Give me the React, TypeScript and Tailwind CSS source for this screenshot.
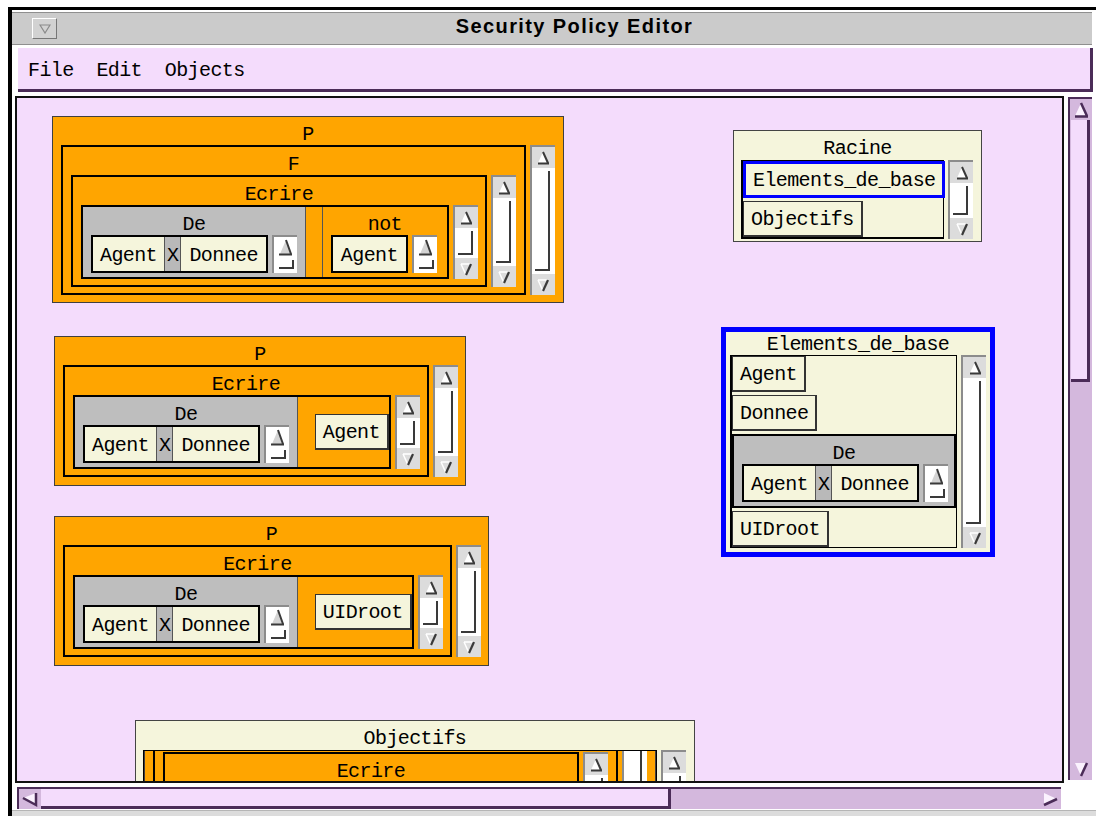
import React from 'react';

const INK = '#3a3a3a';
const PLUM = '#4b2c58';

// ---------- scrollbar glyphs ----------

function BoxUp() {
  return (
    <svg width="16" height="16" viewBox="0 0 16 16">
      <polygon points="8,2 3,13 13,13" fill="#ffffff" />
      <path d="M8 2 L13 13 M3 13.5 H14" stroke={INK} strokeWidth="2" fill="none" />
    </svg>
  );
}

function BoxDown() {
  return (
    <svg width="16" height="16" viewBox="0 0 16 16">
      <path d="M3 3 H13 M3 3 L8 14" stroke="#ffffff" strokeWidth="1.5" fill="none" />
      <path d="M13 3 L8 14" stroke={INK} strokeWidth="2.2" fill="none" />
    </svg>
  );
}

function PlumArrow({ dir }: { dir: 'up' | 'down' | 'left' | 'right' }) {
  if (dir === 'up')
    return (
      <svg width="18" height="18" viewBox="0 0 18 18">
        <polygon points="9,2 3,15 15,15" fill="#fbf2fe" />
        <path d="M9 2 L15 15 M3 15.5 H16" stroke={PLUM} strokeWidth="2.5" fill="none" />
      </svg>
    );
  if (dir === 'down')
    return (
      <svg width="18" height="18" viewBox="0 0 18 18">
        <polygon points="3,3 15,3 9,16" fill="#fbf2fe" />
        <path d="M15 3 L9 16" stroke={PLUM} strokeWidth="2.5" fill="none" />
      </svg>
    );
  if (dir === 'left')
    return (
      <svg width="18" height="18" viewBox="0 0 18 18">
        <polygon points="2,8 15,3 15,15" fill="#fbf2fe" />
        <path d="M2 8 L15 15 V3" stroke={PLUM} strokeWidth="2.5" fill="none" />
      </svg>
    );
  return (
    <svg width="18" height="18" viewBox="0 0 18 18">
      <polygon points="3,3 16,9 3,15" fill="#fbf2fe" />
      <path d="M16 9 L3 15" stroke={PLUM} strokeWidth="2.5" fill="none" />
    </svg>
  );
}

// ---------- small widgets used inside the diagram ----------

function BoxScroll({ className = '' }: { className?: string }) {
  return (
    <div className={`flex w-[25px] shrink-0 flex-col border-l-2 border-t-2 border-[#8c8c8c] bg-white ${className}`}>
      <div className="flex h-[21px] shrink-0 items-center justify-center bg-[#dcdcdc]">
        <BoxUp />
      </div>
      <div className="flex min-h-0 flex-1 pb-[3px] pl-[3px] pr-[5px] pt-[3px]">
        <div className="flex-1 border-b-2 border-r-2 border-[#3a3a3a]" />
      </div>
      <div className="flex h-[21px] shrink-0 items-center justify-center bg-[#dcdcdc]">
        <BoxDown />
      </div>
    </div>
  );
}

function NubScroll() {
  return (
    <div className="h-[38px] w-[25px] shrink-0 border-l-2 border-t-2 border-[#8c8c8c] bg-white">
      <svg width="23" height="36" viewBox="0 0 23 36">
        <polygon points="12,3 6,17 17,17" fill="#d4d4d4" />
        <path d="M12 3 L17 17 M5 17.5 H18" stroke={INK} strokeWidth="2" fill="none" />
        <path d="M5 31 H19 V23" stroke={INK} strokeWidth="2" fill="none" />
      </svg>
    </div>
  );
}

type FrameProps = {
  title: string;
  className?: string;
  head?: string;
  body: string;
  children: React.ReactNode;
};

function Frame({ title, className = '', head = 'h-[28px] pt-[7px]', body, children }: FrameProps) {
  return (
    <div className={`flex shrink-0 flex-col ${className}`}>
      <div className={`flex shrink-0 items-center justify-center leading-none ${head}`}>{title}</div>
      <div className={`flex items-stretch gap-[4px] ${body}`}>{children}</div>
    </div>
  );
}

function Cell({ children, className = '' }: { children: React.ReactNode; className?: string }) {
  return (
    <div className={`flex h-[36px] shrink-0 items-center bg-[#f5f5dc] px-[7px] pt-[3px] leading-none ${className}`}>
      {children}
    </div>
  );
}

function Pair() {
  return (
    <div className="flex h-[38px] shrink-0 border-2 border-black bg-[#f5f5dc] pt-[3px] leading-none">
      <span className="flex items-center px-[7px]">Agent</span>
      <span className="-mt-[3px] flex items-center border-x border-[#555] bg-[#b9b9b9] px-[2px] pt-[3px]">X</span>
      <span className="flex items-center px-[8px]">Donnee</span>
    </div>
  );
}

function DeFrame({ className = '' }: { className?: string }) {
  return (
    <Frame title="De" className={`bg-[#bebebe] ${className}`} body="pl-[8px] pr-[8px] pb-[4px]">
      <Pair />
      <NubScroll />
    </Frame>
  );
}

function Ecrire({ children }: { children: React.ReactNode }) {
  return (
    <Frame title="Ecrire" className="border-2 border-black bg-[#ffa500]" body="pl-[8px] pr-[7px] pb-[6px]">
      {children}
      <BoxScroll />
    </Frame>
  );
}

// P ( F ( Ecrire ( De(Agent x Donnee), not(Agent) ) ) )
function PolicyNot({ className = '' }: { className?: string }) {
  return (
    <Frame title="P" className={`border border-[#404040] bg-[#ffa500] ${className}`} body="pl-[8px] pr-[8px] pb-[7px]">
      <Frame title="F" className="border-2 border-black bg-[#ffa500]" body="pl-[8px] pr-[8px] pb-[6px]">
        <Ecrire>
          <div className="flex border-2 border-black bg-[#ffa500]">
            <DeFrame className="border-r border-[#555]" />
            <Frame title="not" className="ml-[16px] border-l border-[#555]" body="pl-[8px] pr-[10px] pb-[4px]">
              <Cell className="h-[38px] border-2 border-black px-[8px]">Agent</Cell>
              <NubScroll />
            </Frame>
          </div>
        </Ecrire>
        <BoxScroll />
      </Frame>
      <BoxScroll />
    </Frame>
  );
}

// P ( Ecrire ( De(Agent x Donnee), target ) )
function PolicyTarget({ target, className = '' }: { target: string; className?: string }) {
  return (
    <Frame title="P" className={`border border-[#404040] bg-[#ffa500] ${className}`} body="pl-[8px] pr-[7px] pb-[8px]">
      <Ecrire>
        <div className="flex border-2 border-black bg-[#ffa500]">
          <DeFrame className="border-r border-[#555]" />
          <Cell className="ml-[17px] self-center border border-b-2 border-r-2 border-[#333]">{target}</Cell>
        </div>
      </Ecrire>
      <BoxScroll />
    </Frame>
  );
}

const itemCell = 'border border-b-2 border-r-2 border-[#333] self-start';

export default function App() {
  return (
    <div className="relative h-[816px] w-[1096px] overflow-hidden whitespace-nowrap bg-white font-['Liberation_Mono',monospace] text-[20px] tracking-[-0.6px] text-black">
      <div className="ml-[8px] mt-[7px] flex h-[809px] w-[1088px] flex-col border-l-4 border-t-[3px] border-black bg-white">
        {/* title bar */}
        <div className="mr-[4px] mt-[2px] flex h-[33px] shrink-0 items-center border-y border-[#8f8f8f] bg-[#cbcbcb]">
          <div className="ml-[20px] flex h-[21px] w-[25px] items-center justify-center border border-b-[#777] border-l-white border-r-[#777] border-t-white bg-[#d2d2d2]">
            <svg width="12" height="10" viewBox="0 0 12 10">
              <path d="M1 1 H11 L6 9 Z" fill="none" stroke="#8a8a8a" strokeWidth="1.2" />
            </svg>
          </div>
          <div className="flex flex-1 justify-center pb-[5px] font-['Liberation_Sans',Arial,sans-serif] text-[20px] font-bold tracking-[1.4px]">
            Security Policy Editor
          </div>
        </div>

        {/* menu bar */}
        <div className="ml-[6px] mr-[3px] mt-[3px] flex h-[44px] shrink-0 items-center gap-[22.8px] border-b-[3px] border-r-[3px] border-[#4b2c58] bg-[#f4dcfc] pl-[10px] pt-[5px] leading-none">
          <span>File</span>
          <span>Edit</span>
          <span>Objects</span>
        </div>

        {/* canvas + vertical scrollbar */}
        <div className="ml-[3px] mt-[4px] flex shrink-0 gap-[4px]">
          <div className="relative h-[687px] w-[1049px] overflow-hidden border-2 border-[#111] bg-[#f4dcfc]">
            <PolicyNot className="absolute left-[35px] top-[18px]" />
            <PolicyTarget target="Agent" className="absolute left-[37px] top-[238px]" />
            <PolicyTarget target="UIDroot" className="absolute left-[37px] top-[418px]" />

            {/* Racine */}
            <Frame title="Racine" head="h-[29px] pt-[7px]" className="absolute left-[716px] top-[32px] border border-[#444] bg-[#f5f5dc]" body="pl-[7px] pr-[8px] pb-[2px]">
              <div className="flex w-[203px] flex-col gap-[3px] border-b-2 border-l-2 border-r border-t border-black">
                <Cell className="h-[37px] self-start border-[3px] border-[#0000ff] px-[5px]">Elements_de_base</Cell>
                <Cell className={`h-[35px] ${itemCell}`}>Objectifs</Cell>
              </div>
              <BoxScroll />
            </Frame>

            {/* Elements_de_base */}
            <Frame title="Elements_de_base" head="h-[23px] pt-[3px]" className="absolute left-[704px] top-[229px] border-[5px] border-[#0000ff] bg-[#f5f5dc]" body="px-[4px] pb-[4px]">
              <div className="flex w-[227px] flex-col gap-[3px] border-l-2 border-t border-r border-b border-black">
                <Cell className={itemCell}>Agent</Cell>
                <Cell className={itemCell}>Donnee</Cell>
                <DeFrame className="border-2 border-black" />
                <Cell className={itemCell}>UIDroot</Cell>
              </div>
              <BoxScroll />
            </Frame>

            {/* Objectifs */}
            <Frame title="Objectifs" head="h-[29px] pt-[6px]" className="absolute left-[118px] top-[622px] border border-[#444] bg-[#f5f5dc]" body="pl-[7px] pr-[8px] pb-[4px]">
              <div className="h-[120px] overflow-hidden border border-black">
                <PolicyNot className="-mt-[58px]" />
              </div>
              <BoxScroll />
            </Frame>
          </div>

          <div className="mt-[1px] flex h-[683px] w-[24px] flex-col border-l-2 border-t-2 border-[#4b2c58] bg-[#d4b8dd]">
            <div className="flex h-[21px] shrink-0 items-center justify-center">
              <PlumArrow dir="up" />
            </div>
            <div className="ml-[1px] mr-[2px] h-[262px] border-b-[3px] border-r-[3px] border-[#4b2c58] bg-[#f4dcfc]" />
            <div className="flex-1" />
            <div className="flex h-[22px] shrink-0 items-center justify-center">
              <PlumArrow dir="down" />
            </div>
          </div>
        </div>

        {/* horizontal scrollbar */}
        <div className="ml-[5px] mt-[4px] flex h-[22px] w-[1044px] shrink-0 border-l-2 border-t-2 border-[#4b2c58] bg-[#d4b8dd]">
          <div className="flex w-[22px] items-center justify-center">
            <PlumArrow dir="left" />
          </div>
          <div className="w-[630px] border-b-[3px] border-r-[3px] border-[#4b2c58] bg-[#f4dcfc]" />
          <div className="flex-1" />
          <div className="flex w-[22px] items-center justify-center">
            <PlumArrow dir="right" />
          </div>
        </div>

        <div className="mt-[1px] flex-1 border-t border-[#b5b5b5] bg-[#dcdcdc]" />
      </div>
    </div>
  );
}
